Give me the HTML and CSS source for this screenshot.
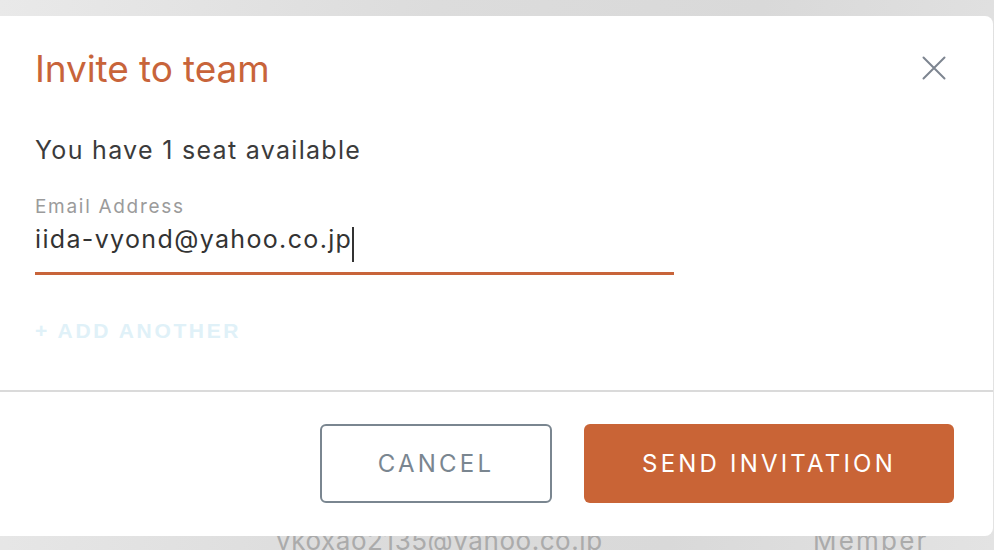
FILE: index.html
```html
<!DOCTYPE html>
<html>
<head>
<meta charset="utf-8">
<link rel="stylesheet" href="styles.css">
</head>
<body>
<div class="page">
  <div class="member-row">
    <span class="member-email">vkoxao2135@yahoo.co.jp</span>
    <span class="member-role">Member</span>
  </div>
</div>
<div class="modal">
  <div class="modal-body">
    <div class="modal-header">
      <h1 class="title">Invite to team</h1>
      <button class="close" aria-label="Close">
        <svg width="24" height="24" viewBox="0 0 24 24"><path d="M1.5 1.5 L22.5 22.5 M22.5 1.5 L1.5 22.5" stroke="#7d8590" stroke-width="2" stroke-linecap="round" fill="none"/></svg>
      </button>
    </div>
    <p class="seats">You have 1 seat available</p>
    <label class="field">
      <span class="field-label">Email Address</span>
      <span class="field-input">iida-vyond@yahoo.co.jp<span class="caret"></span></span>
    </label>
    <div class="add-another">+ ADD ANOTHER</div>
  </div>
  <div class="modal-footer">
    <button class="btn btn-cancel">CANCEL</button>
    <button class="btn btn-send">SEND INVITATION</button>
  </div>
</div>
</body>
</html>
```

FILE: styles.css
```css
* { box-sizing: border-box; }
html, body {
  margin: 0;
  width: 994px;
  height: 550px;
  overflow: hidden;
}
body {
  position: relative;
  background: linear-gradient(100deg, #e9e9e9 0%, #dcdcdc 40%, #d9d9d9 70%, #e3e3e3 100%);
  font-family: Inter, "Noto Sans", sans-serif;
}
.page {
  height: 550px;
  display: flex;
  flex-direction: column;
  justify-content: flex-end;
}
.member-row {
  display: flex;
  align-items: baseline;
  padding-left: 276px;
  font-size: 26px;
  line-height: 26px;
  color: #ababab;
  margin-bottom: -4px;
  white-space: nowrap;
}
.member-email {
  width: 537px;
  letter-spacing: 0.55px;
}
.member-role {
  letter-spacing: 2.2px;
}
.modal {
  position: absolute;
  top: 16px;
  left: -10px;
  width: 1003px;
  height: 520px;
  background: #fff;
  border-radius: 8px;
  display: flex;
  flex-direction: column;
}
.modal-body {
  padding: 0 47px 0 45px;
  flex: 1;
}
.modal-header {
  display: flex;
  justify-content: space-between;
  align-items: flex-start;
  padding-top: 31px;
}
.title {
  margin: 0;
  font-weight: 400;
  font-size: 37px;
  line-height: 44px;
  letter-spacing: -0.1px;
  color: #c8643a;
}
.close {
  border: 0;
  background: none;
  padding: 0;
  width: 24px;
  height: 24px;
  margin-top: 9px;
}
.close svg { display: block; }
.seats {
  margin: 44px 0 0;
  font-size: 25px;
  line-height: 30px;
  letter-spacing: 1.3px;
  color: #3b3b3b;
}
.field {
  display: flex;
  flex-direction: column;
  width: 639px;
  margin-top: 31px;
}
.field-label {
  font-size: 19px;
  line-height: 22px;
  letter-spacing: 1.7px;
  color: #9b9b9b;
}
.field-input {
  display: flex;
  align-items: flex-start;
  margin-top: 4px;
  font-size: 25px;
  line-height: 34px;
  letter-spacing: 1.35px;
  color: #333;
  border-bottom: 3px solid #c8643a;
  padding-bottom: 10px;
}
.caret {
  display: inline-block;
  width: 2px;
  height: 35px;
  margin-top: 5px;
  background: #333;
}
.add-another {
  margin-top: 44px;
  font-family: "Liberation Sans", Arial, sans-serif;
  font-weight: 700;
  font-size: 21px;
  letter-spacing: 2.65px;
  color: #e0f1f8;
  line-height: 24px;
}
.modal-footer {
  border-top: 2px solid #dadada;
  display: flex;
  justify-content: flex-end;
  gap: 32px;
  padding: 32px 39px 33px 0;
}
.btn {
  height: 79px;
  border-radius: 6px;
  font-family: Inter, sans-serif;
  font-size: 24px;
  letter-spacing: 3.2px;
  padding: 0;
  cursor: pointer;
}
.btn-cancel {
  width: 232px;
  background: #fff;
  border: 2px solid #7a8690;
  color: #7a8690;
}
.btn-send {
  width: 370px;
  background: #c96436;
  border: 0;
  color: #fff;
}
```
